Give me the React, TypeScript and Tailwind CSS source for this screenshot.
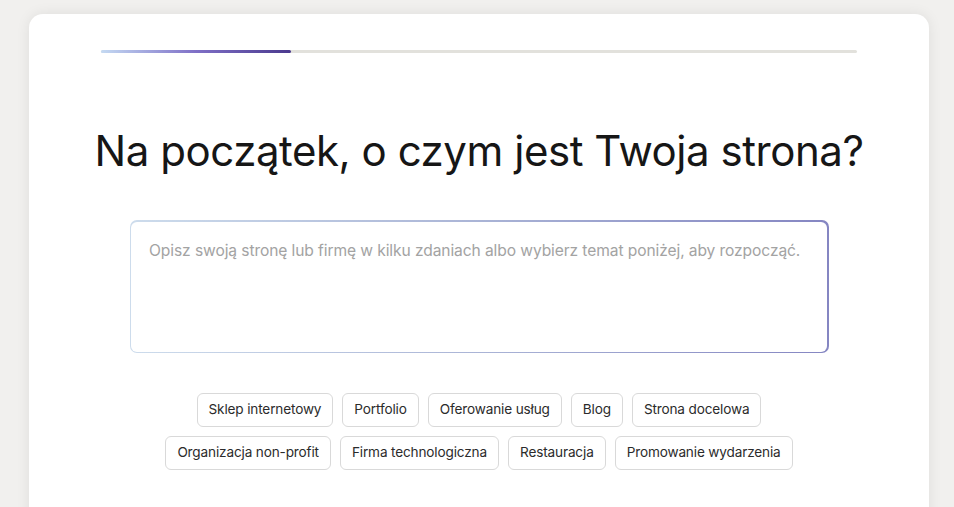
const chipsTop = ["Sklep internetowy", "Portfolio", "Oferowanie usług", "Blog", "Strona docelowa"];
const chipsBottom = ["Organizacja non-profit", "Firma technologiczna", "Restauracja", "Promowanie wydarzenia"];

function Chip({ label }: { label: string }) {
  return (
    <button className="h-[34px] px-[11px] rounded-[6px] border border-[#d9d9d9] bg-white text-[13.6px] tracking-[-0.15px] text-[#2b2b2b] leading-none">
      {label}
    </button>
  );
}

export default function App() {
  return (
    <div className="h-[507px] overflow-hidden bg-[#f1f0ee] pt-[14px] pl-[29px] pr-[25px] font-['Inter',sans-serif]">
      <div className="h-[520px] rounded-[14px] bg-white shadow-[0_0_14px_rgba(0,0,0,0.08)] flex flex-col items-center">
        {/* progress */}
        <div className="mt-[36px] w-[756px] h-[3px] rounded-full bg-[#e2e1dc] flex">
          <div className="w-[190px] h-full rounded-full bg-gradient-to-r from-[#c5daf2] via-[#7f6fc6] to-[#4b3a8e]" />
        </div>

        <h1 className="mt-[73px] text-[42px] leading-[50px] text-[#161616] tracking-[-0.45px]">
          Na początek, o czym jest Twoja strona?
        </h1>

        <div className="mt-[44px] w-[699px] h-[133px] rounded-[7px] p-[1.5px] bg-gradient-to-r from-[#cddcec] via-[#aab4d6] to-[#8586c2]">
          <div className="w-full h-full rounded-[6px] bg-white px-[18px] pt-[17px]">
            <p className="text-[15.6px] text-[#a3a3a3] tracking-[-0.1px]">
              Opisz swoją stronę lub firmę w kilku zdaniach albo wybierz temat poniżej, aby rozpocząć.
            </p>
          </div>
        </div>

        <div className="mt-[40px] flex flex-col items-center gap-[9px]">
          <div className="flex gap-[9px]">
            {chipsTop.map((c) => (
              <Chip key={c} label={c} />
            ))}
          </div>
          <div className="flex gap-[9px]">
            {chipsBottom.map((c) => (
              <Chip key={c} label={c} />
            ))}
          </div>
        </div>
      </div>
    </div>
  );
}
